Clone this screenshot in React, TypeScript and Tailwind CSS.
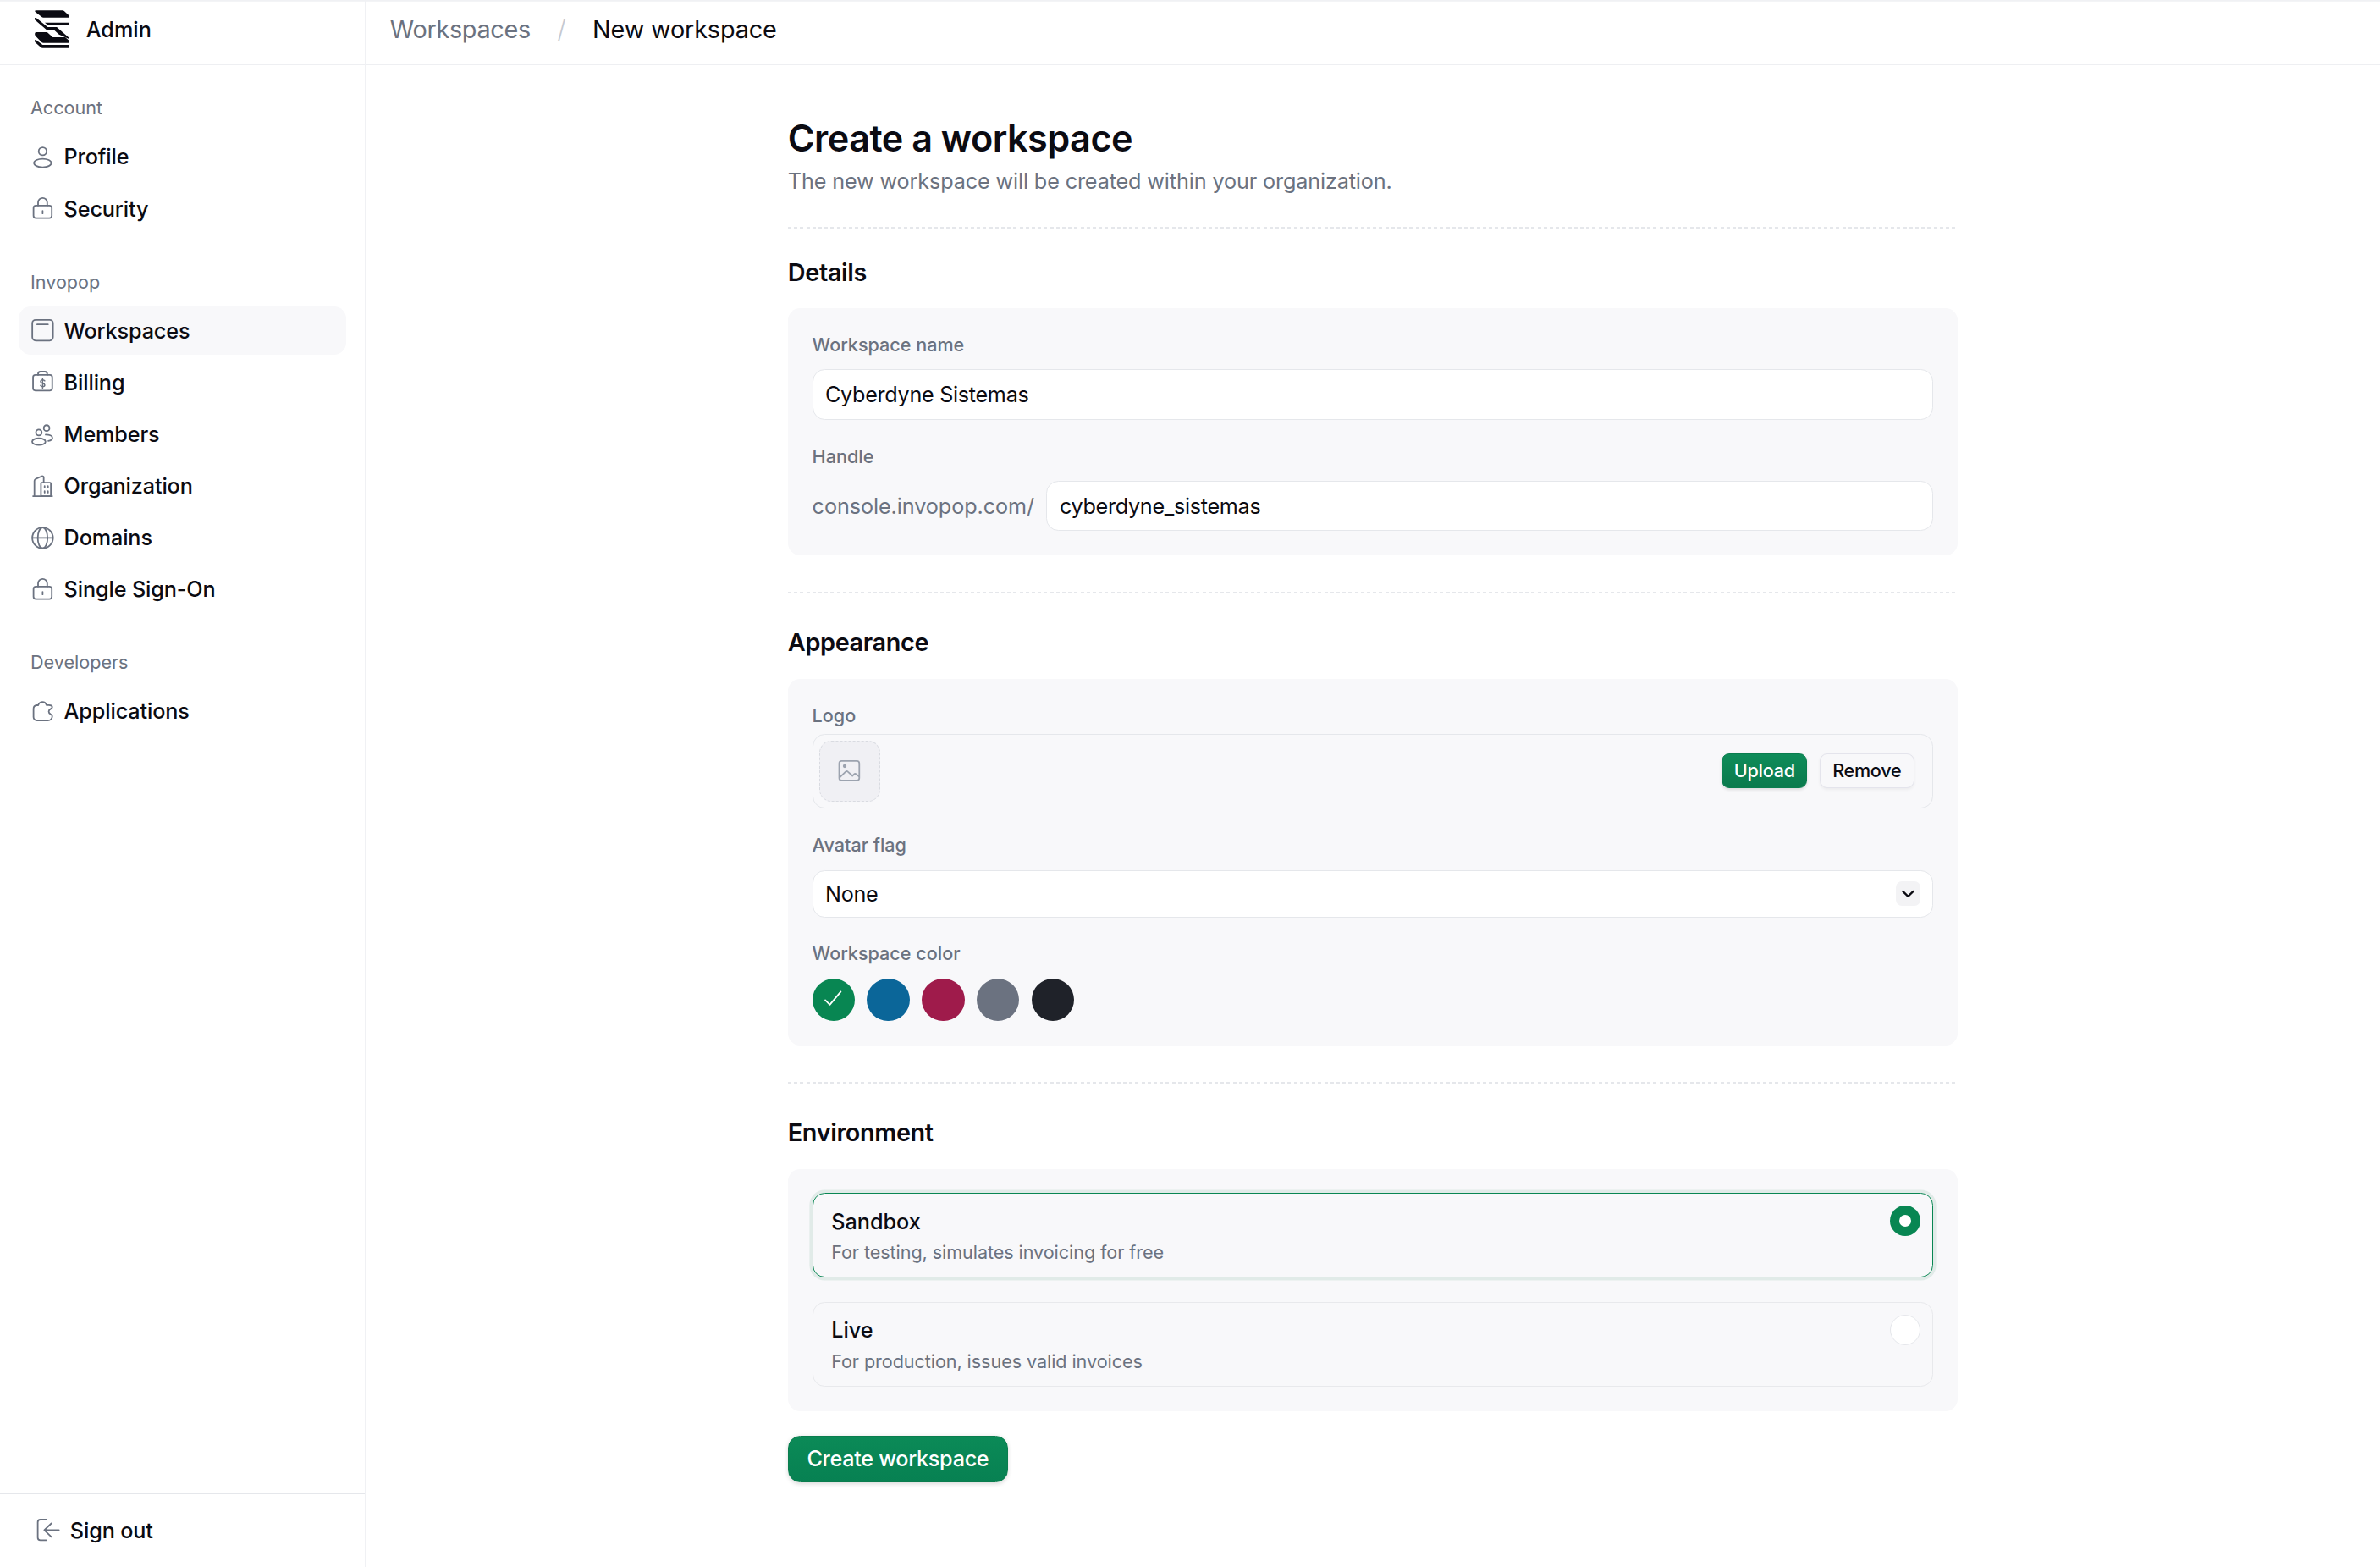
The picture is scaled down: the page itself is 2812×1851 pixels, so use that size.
import type { ReactNode } from 'react';

const Icon = ({ children, className = 'text-[#6b7280]' }: { children: ReactNode; className?: string }) => (
  <svg
    viewBox="0 0 16 16"
    fill="none"
    stroke="currentColor"
    strokeWidth="1"
    strokeLinecap="round"
    strokeLinejoin="round"
    className={`h-4 w-4 shrink-0 ${className}`}
  >
    {children}
  </svg>
);

const LockIcon = () => (
  <Icon>
    <rect x="2" y="6" width="12" height="8.2" rx="1.6" />
    <path d="M5 6V4a3 3 0 0 1 6 0v2" />
    <path d="M8 9.5v1.7" />
  </Icon>
);

const icons: Record<string, ReactNode> = {
  Profile: (
    <Icon>
      <circle cx="8" cy="4.3" r="2.6" />
      <ellipse cx="8" cy="12" rx="5.7" ry="2.8" />
    </Icon>
  ),
  Security: <LockIcon />,
  Workspaces: (
    <Icon>
      <rect x="1.2" y="1" width="13.6" height="13.6" rx="2.2" />
      <path d="M4.4 4h7.1" />
    </Icon>
  ),
  Billing: (
    <Icon>
      <rect x="1.7" y="3.3" width="12.6" height="10.2" rx="1.5" />
      <path d="M5 3.3V2.6c0-.9.6-1.5 1.5-1.5h3c.9 0 1.5.6 1.5 1.5v.7" />
      <path
        strokeWidth=".8"
        d="M9.4 7.2c-.3-.5-.8-.7-1.4-.7-.8 0-1.4.5-1.4 1.1 0 1.5 2.8.8 2.8 2.3 0 .6-.6 1.1-1.4 1.1-.6 0-1.1-.3-1.4-.8M8 5.7v6.4"
      />
    </Icon>
  ),
  Members: (
    <Icon>
      <circle cx="5.5" cy="6.6" r="1.9" />
      <ellipse cx="5.5" cy="12.6" rx="4.4" ry="2.2" />
      <circle cx="10.6" cy="3.7" r="1.9" />
      <path d="M10 8c2.3 0 4.4.8 4.4 2.1 0 1-1.2 1.8-2.7 2" />
    </Icon>
  ),
  Organization: (
    <Icon>
      <path d="M1.7 14.5h12.6" />
      <path d="M2.6 14.5V4.4c0-.5.3-.9.7-1.1l4.2-1.9c.6-.2 1.2.2 1.2.8v3.4" />
      <rect x="6.9" y="5.6" width="6.5" height="8.9" rx=".5" />
      <path d="M9.3 7.9v1M11.5 7.9v1M9.3 11.2v1M11.5 11.2v1" />
    </Icon>
  ),
  Domains: (
    <Icon>
      <circle cx="8" cy="8" r="6.8" />
      <ellipse cx="8" cy="8" rx="3.2" ry="6.8" />
      <path d="M1.2 8h13.6" />
    </Icon>
  ),
  'Single Sign-On': <LockIcon />,
  Applications: (
    <Icon>
      <path d="M2 6.2c0-1.4.9-2.2 2.2-2.3h.9c.4-1.3 1.5-2.2 2.8-2.2 1.2 0 2.2.8 2.6 2.1h1.6c1.2 0 2.2.6 2.2 1.4 0 .5-.4.8-1 1.1-.8.4-1.3 1-1.3 1.8s.5 1.4 1.3 1.8c.6.3 1 .6 1 1.2 0 1.6-1.3 2.8-2.9 2.8H4.3c-1.3 0-2.3-1-2.3-2.3z" />
    </Icon>
  ),
};

const navGroups = [
  { title: 'Account', items: ['Profile', 'Security'] },
  { title: 'Invopop', items: ['Workspaces', 'Billing', 'Members', 'Organization', 'Domains', 'Single Sign-On'] },
  { title: 'Developers', items: ['Applications'] },
];

const Logo = () => (
  <svg viewBox="14 13 124 133" className="h-[25px] w-[23px]" fill="#0b0b12">
    <path d="M18 13h94q4 0 7 3l19 17v5H45q-4 0-7-3L16 18q-3-4 2-5z" />
    <path d="M50 56h88v10H62z" />
    <path d="M14 40l4-2 42 34h32l46 40v3l-38-17-18-16H56L14 46z" />
    <path d="M18 90h40l20 18h44l16 14v6H45q-4 0-7-3L16 103q-4-10 2-13z" />
    <path d="M14 118l4-1 24 18h96v11H42q-4 0-7-3L15 125z" />
  </svg>
);

const Divider = () => (
  <div className="h-px bg-[repeating-linear-gradient(90deg,#e5e7eb_0,#e5e7eb_2.2px,transparent_2.2px,transparent_4px)]" />
);

const Heading = ({ children }: { children: ReactNode }) => (
  <h2 className="mb-3 text-base leading-6 font-semibold tracking-[-0.012em]">{children}</h2>
);

const Panel = ({ children }: { children: ReactNode }) => (
  <div className="rounded-lg bg-[#f8f8fa] p-4">{children}</div>
);

const Label = ({ children }: { children: ReactNode }) => (
  <div className="text-xs leading-4 font-medium text-[#6b7280]">{children}</div>
);

const Input = ({ children }: { children: ReactNode }) => (
  <div className="flex h-[33px] min-w-0 flex-1 items-center rounded-lg border border-[#e5e7eb] bg-white px-2 text-sm tracking-[-0.012em]">
    {children}
  </div>
);

const EnvOption = ({ title, description, active }: { title: string; description: string; active?: boolean }) => (
  <div
    className={`relative h-[55.5px] rounded-lg border px-3 py-2 ${
      active ? 'border-[#088652] shadow-[0_0_0_2px_#e1ebe8]' : 'border-[#e8e9ec]'
    }`}
  >
    <div className="text-sm leading-5 font-medium">{title}</div>
    <div className="mt-[2.5px] text-xs leading-4 tracking-[-0.003em] text-[#6b7280]">{description}</div>
    {active ? (
      <div className="absolute top-[7.5px] right-2 flex h-5 w-5 items-center justify-center rounded-full bg-[#088652]">
        <div className="h-[7.5px] w-[7.5px] rounded-full bg-white" />
      </div>
    ) : (
      <div className="absolute top-[7.5px] right-2 h-5 w-5 rounded-full border border-[#e5e7eb] bg-white" />
    )}
  </div>
);

export default function App() {
  return (
    <div className="flex h-[1028.3px] w-[1562.2px] overflow-hidden bg-white text-[#0b0b12] shadow-[inset_0_1px_0_#f0f1f4] [font-family:Inter,sans-serif] [zoom:1.8]">
      <aside className="flex w-60 shrink-0 flex-col border-r border-[#f0f1f4]">
        <div className="flex h-[43px] shrink-0 items-center gap-[11px] border-b border-[#eeeff2] pb-1 pl-[22.5px]">
          <Logo />
          <span className="text-sm font-medium">Admin</span>
        </div>
        <nav className="flex flex-1 flex-col gap-6 px-3 pt-5">
          {navGroups.map((group) => (
            <div key={group.title}>
              <div className="mb-2 px-2 text-xs leading-4 text-[#6b7280]">{group.title}</div>
              <div className="flex flex-col gap-0.5">
                {group.items.map((item) => (
                  <a
                    key={item}
                    className={`flex h-8 items-center gap-1.5 rounded-lg px-2 text-sm font-medium tracking-[-0.005em] ${
                      item === 'Workspaces' ? 'bg-[#f8f8fa]' : ''
                    }`}
                  >
                    {icons[item]}
                    {item}
                  </a>
                ))}
              </div>
            </div>
          ))}
        </nav>
        <div className="flex h-[48.5px] shrink-0 items-center gap-1.5 border-t border-[#e5e7eb] pl-6 text-sm font-medium tracking-[-0.005em]">
          <Icon>
            <path d="M6.5 1.1H2.6c-1 0-1.7.7-1.7 1.7v10.1c0 1 .7 1.7 1.7 1.7h3.9" />
            <path d="M14.8 8H5.4M9.8 3.6 5.2 8l4.6 4.4" />
          </Icon>
          Sign out
        </div>
      </aside>

      <div className="flex min-w-0 flex-1 flex-col">
        <header className="flex h-[43px] shrink-0 items-center border-b border-[#eeeff2] px-4 pb-1 text-base">
          <span className="tracking-[-0.01em] text-[#6b7280]">Workspaces</span>
          <span className="mx-[17.5px] font-light text-[#c4c8d0]">/</span>
          <span className="tracking-[-0.005em]">New workspace</span>
        </header>

        <main className="mx-auto w-3xl pt-8">
          <h1 className="text-2xl leading-8 font-semibold tracking-[-0.012em]">Create a workspace</h1>
          <p className="mb-[18px] text-sm leading-6 tracking-[-0.005em] text-[#6b7280]">
            The new workspace will be created within your organization.
          </p>
          <Divider />

          <div className="mt-[16.5px]">
            <Heading>Details</Heading>
            <Panel>
              <Label>Workspace name</Label>
              <div className="mt-2 flex">
                <Input>Cyberdyne Sistemas</Input>
              </div>
              <div className="mt-4">
                <Label>Handle</Label>
              </div>
              <div className="mt-2 flex items-center gap-2">
                <span className="text-sm tracking-[-0.003em] text-[#6b7280]">console.invopop.com/</span>
                <Input>cyberdyne_sistemas</Input>
              </div>
            </Panel>
          </div>

          <div className="mt-6">
            <Divider />
          </div>

          <div className="mt-5">
            <Heading>Appearance</Heading>
            <Panel>
              <Label>Logo</Label>
              <div className="mt-1 flex h-[49px] items-center justify-between rounded-lg border border-[#e5e7eb] pr-3 pl-1">
                <div className="flex h-10 w-10 items-center justify-center rounded-lg border border-dashed border-[#d9dbe1] bg-[#f0f0f4]">
                  <Icon className="text-[#9ca3af]">
                    <rect x="1.4" y="1.6" width="13.2" height="12.8" rx="1.6" />
                    <circle cx="5" cy="5" r=".7" fill="currentColor" />
                    <path d="M1.6 12.6 5.6 8.7c.5-.5 1-.5 1.5 0l3 2.7 1-1c.5-.5 1-.5 1.5-.1l1.9 1.6" />
                  </Icon>
                </div>
                <div className="flex items-center gap-2 text-xs font-medium">
                  <button className="flex h-[23px] items-center rounded-[5px] border border-[#0a7d4e] bg-linear-to-b from-[#0f8c59] to-[#0a7a4d] px-[7.5px] tracking-[-0.012em] text-white shadow-[0_1px_2px_rgba(0,0,0,0.12)]">
                    Upload
                  </button>
                  <button className="flex h-[23px] items-center rounded-[5px] border border-[#e4e4ec] bg-[#f8f8fa] px-2 tracking-[-0.012em] shadow-[0_1px_2px_rgba(0,0,0,0.05)]">
                    Remove
                  </button>
                </div>
              </div>

              <div className="mt-4">
                <Label>Avatar flag</Label>
              </div>
              <div className="mt-[8.6px] flex h-[31px] items-center justify-between rounded-lg border border-[#e5e7eb] bg-white px-2 text-sm tracking-[-0.012em]">
                None
                <div className="flex h-4 w-4 items-center justify-center rounded-[4px] bg-[#f3f3f5]">
                  <svg viewBox="0 0 16 16" className="h-4 w-4" fill="none" stroke="currentColor" strokeWidth="1.25" strokeLinecap="round" strokeLinejoin="round">
                    <path d="m4.6 6.6 3.4 3.3 3.4-3.3" />
                  </svg>
                </div>
              </div>

              <div className="mt-4">
                <Label>Workspace color</Label>
              </div>
              <div className="mt-2 flex gap-2">
                <div className="flex h-7 w-7 items-center justify-center rounded-full bg-[#088652] text-white">
                  <Icon className="text-white">
                    <path d="m2.8 8.6 3 3 7.2-8.6" />
                  </Icon>
                </div>
                <div className="h-7 w-7 rounded-full bg-[#0b6699]" />
                <div className="h-7 w-7 rounded-full bg-[#9f1b4b]" />
                <div className="h-7 w-7 rounded-full bg-[#6b7280]" />
                <div className="h-7 w-7 rounded-full bg-[#1f2229]" />
              </div>
            </Panel>
          </div>

          <div className="mt-6">
            <Divider />
          </div>

          <div className="mt-5">
            <Heading>Environment</Heading>
            <Panel>
              <div className="flex flex-col gap-4">
                <EnvOption title="Sandbox" description="For testing, simulates invoicing for free" active />
                <EnvOption title="Live" description="For production, issues valid invoices" />
              </div>
            </Panel>
          </div>

          <button className="mt-4 flex h-[31px] items-center rounded-lg border border-[#0a7d4e] bg-linear-to-b from-[#0b8a57] to-[#078152] px-3 text-sm font-medium tracking-[-0.012em] text-white shadow-[0_1px_3px_rgba(0,0,0,0.15)]">
            Create workspace
          </button>
        </main>
      </div>
    </div>
  );
}
